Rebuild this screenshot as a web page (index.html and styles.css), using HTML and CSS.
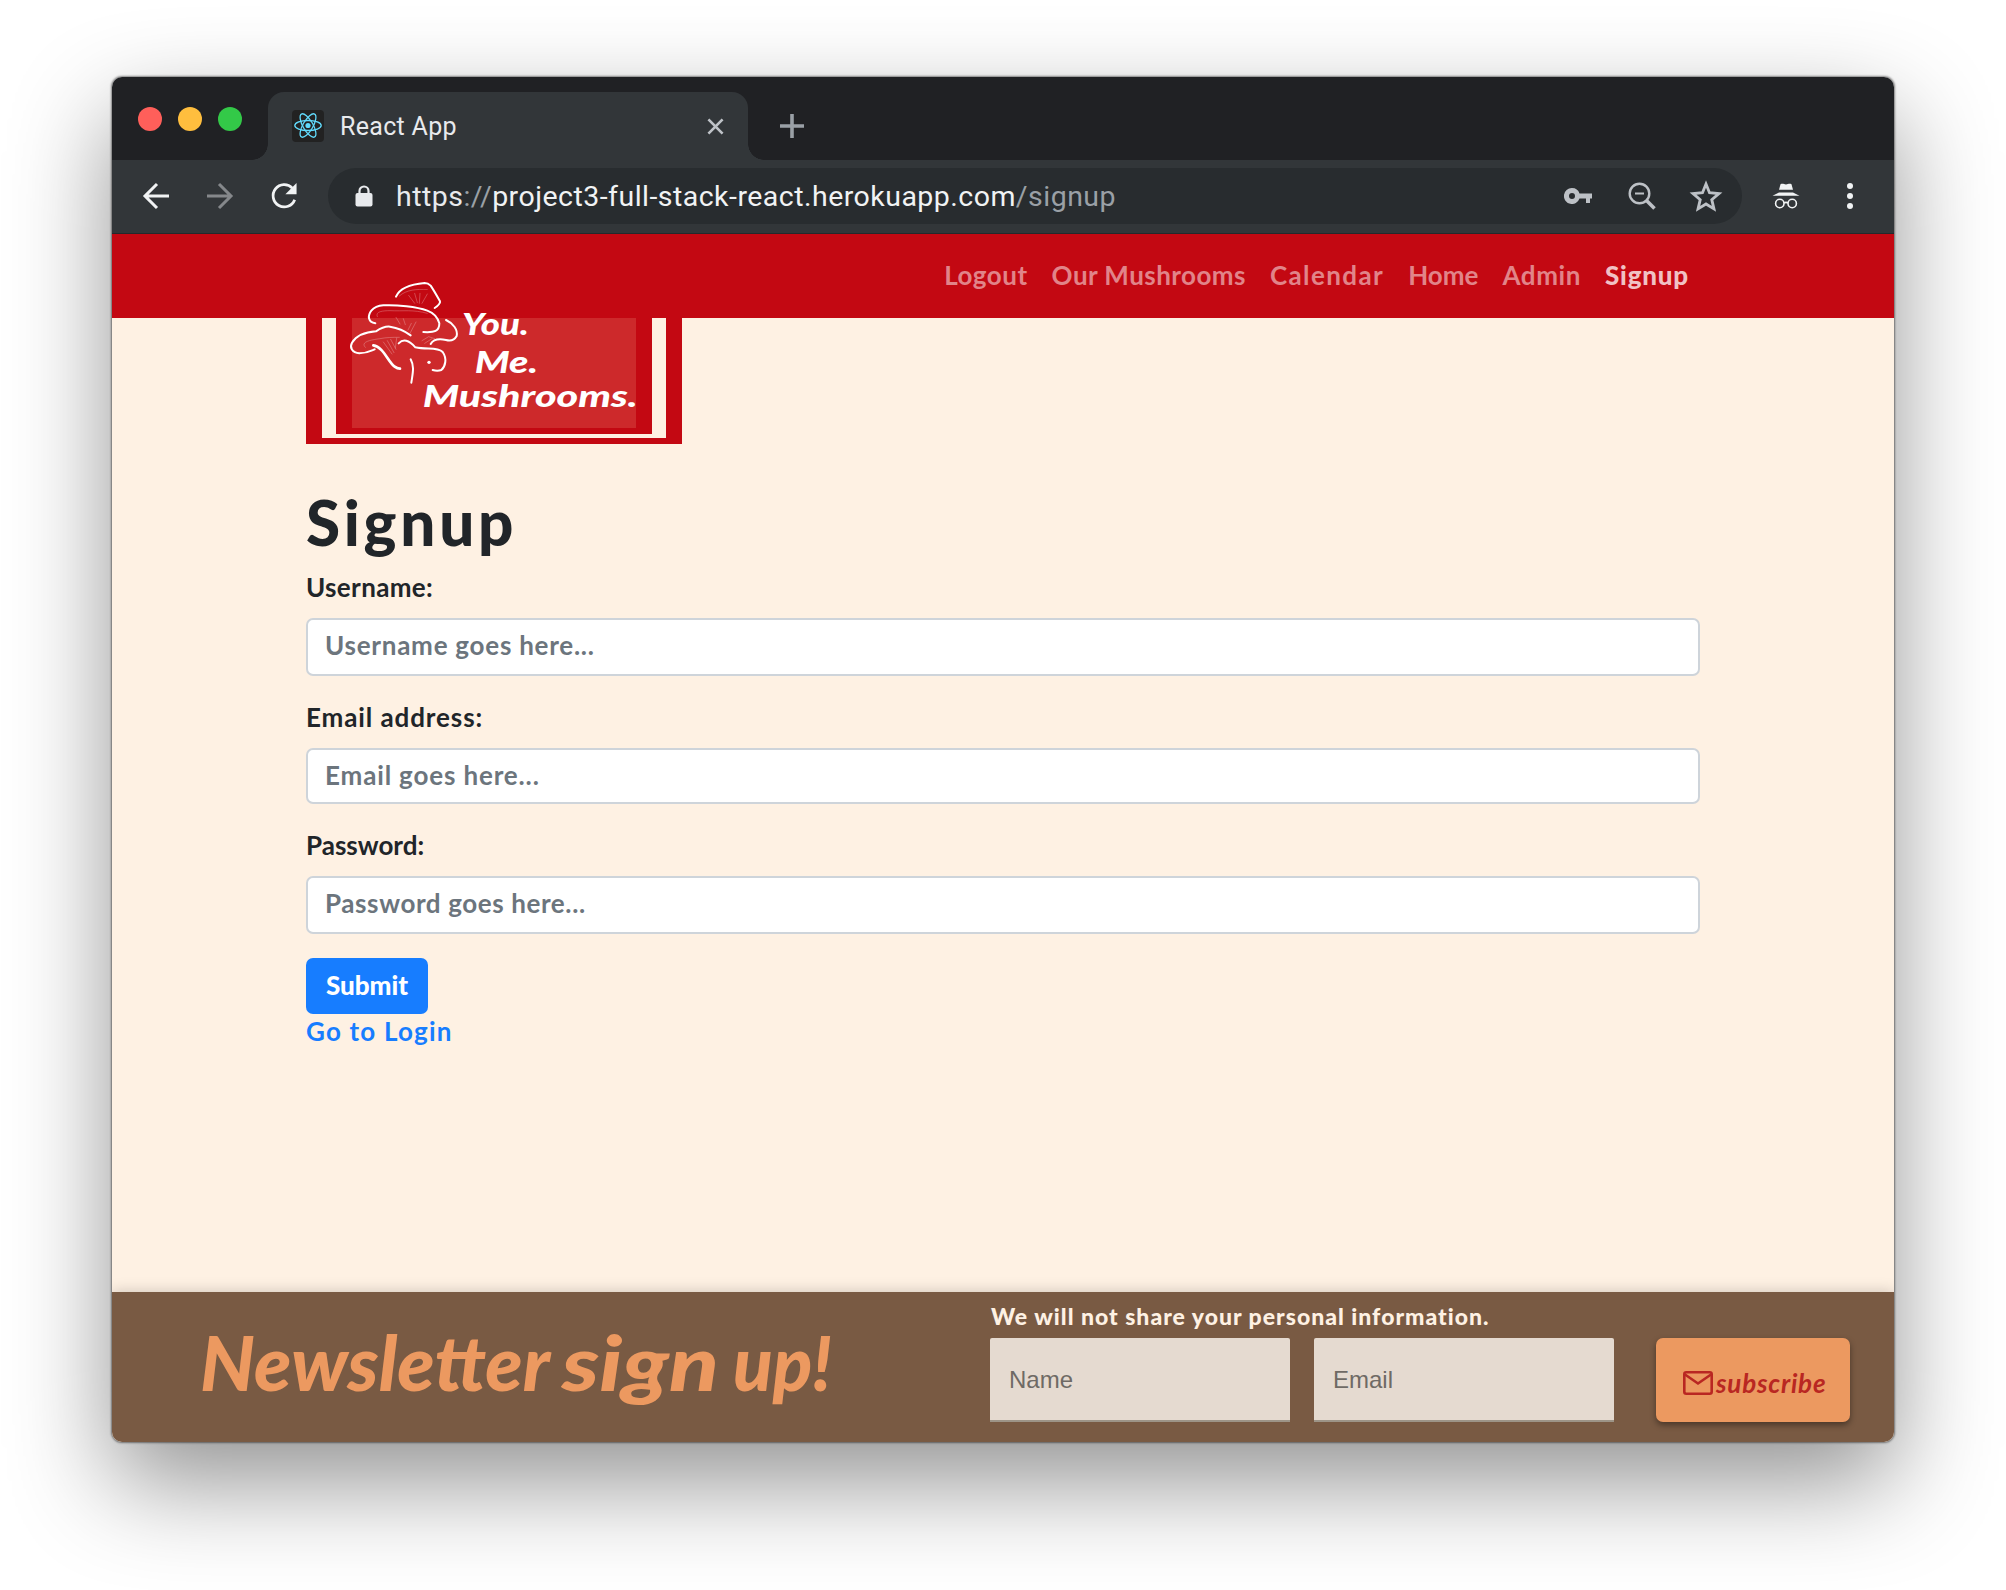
FILE: index.html
```html
<!DOCTYPE html>
<html lang="en">
<head>
<meta charset="utf-8">
<title>React App</title>
<link rel="stylesheet" href="styles.css">
</head>
<body>
<div class="window">
  <div class="tabstrip">
    <div class="lights"><i class="light red"></i><i class="light amber"></i><i class="light green"></i></div>
    <div class="tab">
      <svg class="favicon" viewBox="0 0 32 32"><rect width="32" height="32" rx="4" fill="#222"/><g fill="none" stroke="#61dafb" stroke-width="1.3"><ellipse cx="16" cy="15.500" rx="13.200" ry="5"/><ellipse cx="16" cy="15.500" rx="13.200" ry="5" transform="rotate(60 16 15.500)"/><ellipse cx="16" cy="15.500" rx="13.200" ry="5" transform="rotate(120 16 15.500)"/></g><circle cx="16" cy="15.500" r="2.600" fill="#61dafb"/></svg>
      <span class="tab-title">React App</span>
      <svg class="tab-close" viewBox="0 0 18 18"><path d="M1.500 1.500l15 15M16.500 1.500l-15 15"/></svg>
    </div>
    <svg class="new-tab" viewBox="0 0 24 24"><path d="M12 0v24M0 12h24"/></svg>
  </div>
  <div class="toolbar">
    <svg class="nav-ico back" viewBox="0 0 26 26"><path d="M26 13H2M14 1L2 13l12 12"/></svg>
    <svg class="nav-ico fwd" viewBox="0 0 26 26"><path d="M0 13h24M12 1l12 12-12 12"/></svg>
    <svg class="nav-ico reload" viewBox="0 0 28 28"><path d="M25.500 18A12 12 0 1 1 23 5.500"/><path d="M27.500 0v12H15.500z" class="solid"/></svg>
    <div class="omnibox">
      <svg class="lock" viewBox="0 0 18 22"><path d="M4.500 9V6a4.500 4.500 0 0 1 9 0v3" fill="none" stroke="#e8eaed" stroke-width="2.200"/><rect x=".5" y="8" width="17" height="13.500" rx="2" fill="#e8eaed"/></svg>
      <span class="url"><span class="scheme">https</span><span class="dim">://</span><span class="host">project3-full-stack-react.herokuapp.com</span><span class="dim">/signup</span></span>
      <svg class="key" viewBox="0 0 28 16"><path fill="#bdc1c6" fill-rule="evenodd" d="M8 0a8 8 0 1 0 7.500 10.500H22V15h4v-4.500h2v-5H15.500A8 8 0 0 0 8 0zm0 5a3 3 0 1 1 0 6 3 3 0 0 1 0-6z"/></svg>
      <svg class="lens" viewBox="0 0 28 28"><g fill="none" stroke="#bdc1c6"><circle cx="11.500" cy="11.500" r="9.800" stroke-width="2.400"/><path d="M7 11.500h9" stroke-width="1.800"/><path d="M18.500 18.500l8 8" stroke-width="3.600"/></g></svg>
      <svg class="star" viewBox="0 0 30 29"><path fill="none" stroke="#bdc1c6" stroke-width="2.500" d="M15 3.500l3.100 7.700 8.300.7-6.300 5.400 1.900 8.100L15 21.100l-7 4.300 1.900-8.100-6.300-5.400 8.300-.7z"/></svg>
    </div>
    <svg class="incognito" viewBox="0 0 28 26"><path fill="#f1f3f4" d="M8.500 1.200c2.500-1 3.500.3 5.500.3s3-1.300 5.500-.3l1.500 5.500H7zM.5 12.800l6.500-3.300h14l6.500 3.300z"/><g fill="none" stroke="#f1f3f4" stroke-width="1.600"><circle cx="7.800" cy="20.500" r="4.200"/><circle cx="20.200" cy="20.500" r="4.200"/><path d="M12 20q2-1.200 4 0"/></g></svg>
    <div class="menu-dots"><i></i><i></i><i></i></div>
  </div>
  <div class="page">
    <nav class="navbar">
      <a class="logout">Logout</a><a class="mushrooms">Our Mushrooms</a><a class="calendar">Calendar</a><a>Home</a><a class="admin">Admin</a><a class="active">Signup</a>
    </nav>
    <main class="content">
      <div class="brand">
        <div class="brand-mid"><div class="brand-in"><div class="brand-core"></div></div></div>
        <svg class="brand-art" viewBox="0 0 930 480">
          <g fill="none" stroke="#fff" stroke-linecap="round" stroke-linejoin="round">
            <g stroke-width="6">
              <path d="M168 80C180 52 220 42 254 39Q264 39 272 47C282 62 292 80 300 94Q302 102 284 114"/>
              <path d="M106 160C84 156 82 138 94 122Q106 108 130 106C170 104 230 110 262 122Q290 132 298 160C298 184 284 188 250 186"/>
              <path d="M318 150C340 160 354 180 350 198Q340 216 318 210C300 206 280 208 272 222"/>
              <path d="M104 238C90 244 80 250 58 250C36 248 28 232 36 218C50 196 80 186 108 184Q132 168 150 170C176 174 196 184 212 196"/>
              <path d="M100 226C130 230 144 276 164 290Q172 296 180 296" stroke-width="8"/>
              <path d="M176 220C190 206 206 210 226 232C260 240 292 230 308 246C322 266 316 290 304 300Q292 304 278 300"/>
              <path d="M212 268C224 290 218 310 214 338"/>
            </g>
            <g stroke-width="1.500" opacity=".5">
              <path d="M178 78C200 58 230 58 262 58M206 76l18 24M224 70l8 28M240 70l-2 30M262 72l-16 28"/>
              <path d="M112 140C104 124 130 122 150 122C190 124 220 118 262 130M168 142l12 20M190 146l6 18M228 156l-18 34M214 160l-10 20"/>
              <path d="M76 232C60 216 90 210 120 206C140 202 156 202 178 202M130 216l26 36M142 212l20 36M152 208l16 30M170 204l-4 30M246 212l20-12 18 6M254 220l22-14"/>
            </g>
          </g>
          <circle cx="267" cy="277" r="5" fill="#fff"/>
          <g class="brand-words">
            <text x="366" y="196" textLength="200" lengthAdjust="spacingAndGlyphs">You.</text>
            <text x="404" y="308" textLength="190" lengthAdjust="spacingAndGlyphs">Me.</text>
            <text x="248" y="410" textLength="645" lengthAdjust="spacingAndGlyphs">Mushrooms.</text>
          </g>
        </svg>
      </div>
      <h1 class="title">Signup</h1>
      <form class="form">
        <label class="label username">Username:</label>
        <div class="field username-field">Username goes here...</div>
        <label class="label email">Email address:</label>
        <div class="field email-field">Email goes here...</div>
        <label class="label">Password:</label>
        <div class="field">Password goes here...</div>
        <button class="submit" type="button">Submit</button>
        <a class="login">Go to Login</a>
      </form>
    </main>
    <footer class="footer">
      <svg class="news" viewBox="0 0 640 130">
        <text x="0" y="89" textLength="350" lengthAdjust="spacingAndGlyphs">Newsletter</text>
        <text x="362" y="89" textLength="157" lengthAdjust="spacingAndGlyphs">sign</text>
        <text x="533" y="89" textLength="99" lengthAdjust="spacingAndGlyphs">up!</text>
      </svg>
      <div class="subscribe-area">
        <p class="note">We will not share your personal information.</p>
        <div class="row">
          <div class="filled">Name</div>
          <div class="filled">Email</div>
          <button class="subscribe" type="button">
            <svg class="mail" viewBox="0 0 30 24"><rect x="1.300" y="1.300" width="27.400" height="21.400" rx="2"/><path d="M2 3.500l13 9 13-9"/></svg>
            <span>subscribe</span>
          </button>
        </div>
      </div>
    </footer>
  </div>
</div>
</body>
</html>
```

FILE: styles.css
```css
* { box-sizing: border-box; }
body { margin: 0; height: 1590px; background: #fff; overflow: hidden; font-family: Lato, "Open Sans", sans-serif; }
svg { display: block; flex: none; }

.window {
  width: 1782px; height: 1365px; margin: 77px 0 0 112px;
  border-radius: 10px; overflow: hidden; display: flex; flex-direction: column;
  box-shadow: 0 0 2px 1px rgba(0,0,0,.45), 0 40px 100px rgba(0,0,0,.43);
}

/* Browser chrome */
.tabstrip { height: 83px; background: #202124; display: flex; align-items: flex-start; font-family: Roboto, sans-serif; }
.lights { display: flex; gap: 16px; padding: 30px 0 0 26px; width: 156px; flex: none; }
.light { width: 24px; height: 24px; border-radius: 50%; }
.red { background: #ff5f5a; }
.amber { background: #ffbe3e; }
.green { background: #33c948; }
.tab {
  position: relative; width: 480px; height: 68px; margin-top: 15px; flex: none;
  border-radius: 16px 16px 0 0; background: #323639;
  display: flex; align-items: center; padding: 0 24px 0 24px;
}
.tab::before, .tab::after { content: ""; position: absolute; bottom: 0; width: 16px; height: 16px; }
.tab::before { left: -16px; background: radial-gradient(circle at 0 0, #202124 15.5px, #323639 16px); }
.tab::after { right: -16px; background: radial-gradient(circle at 100% 0, #202124 15.5px, #323639 16px); }
.favicon { width: 32px; height: 32px; }
.tab-title { margin-left: 16px; font-size: 25px; letter-spacing: .3px; color: #e8eaed; flex: 1; }
.tab-close { width: 17px; height: 17px; fill: none; stroke: #bdc1c6; stroke-width: 2.8; }
.new-tab { width: 24px; height: 24px; margin: 37px 0 0 32px; fill: none; stroke: #9aa0a6; stroke-width: 3.6; }

.toolbar { height: 74px; background: #323639; border-bottom: 1px solid #25282b; display: flex; align-items: flex-start; padding: 8px 0 0 31px; font-family: Roboto, sans-serif; }
.nav-ico { width: 26px; height: 26px; margin-top: 15px; overflow: visible; fill: none; stroke: #f1f3f4; stroke-width: 3; }
.nav-ico .solid { fill: #f1f3f4; stroke: none; }
.fwd { margin-left: 38px; stroke: #85888b; }
.reload { margin-left: 38px; }
.omnibox { width: 1414px; height: 56px; margin-left: 31px; border-radius: 28px; background: #282c2f; display: flex; align-items: center; padding: 0 19px 0 27px; flex: none; }
.lock { width: 18px; height: 22px; }
.url { font-size: 28.5px; letter-spacing: .47px; margin-left: 23px; flex: 1; color: #e8eaed; white-space: nowrap; }
.url .host { color: #f1f3f4; }
.url .dim { color: #9aa0a6; }
.key { width: 28px; height: 16px; }
.lens { width: 28px; height: 28px; margin-left: 36px; }
.star { width: 34px; height: 33px; margin-left: 33px; }
.incognito { width: 28px; height: 26px; margin: 15px 0 0 30px; }
.menu-dots { display: flex; flex-direction: column; gap: 4px; margin: 15px 0 0 47px; }
.menu-dots i { width: 6px; height: 6px; border-radius: 50%; background: #f1f3f4; }

/* Page */
.page { flex: 1; background: #fef1e3; display: flex; flex-direction: column; }
.navbar { height: 84px; background: #c30812; display: flex; align-items: center; justify-content: flex-end; gap: 24px; padding: 0 205px 2px 0; font-size: 26px; font-weight: 700; color: #e18489; }
.navbar .logout { letter-spacing: .5px; }
.navbar .mushrooms { letter-spacing: .45px; }
.navbar .calendar { letter-spacing: 1.4px; }
.navbar .admin { letter-spacing: .6px; }
.navbar .active { color: #f1c1c4; font-weight: 900; letter-spacing: .8px; }
.content { flex: 1; padding: 0 194px; }
.brand { position: relative; width: 376px; height: 126px; background: #c30812; padding: 0 16px 6px; }
.brand-mid { height: 120px; background: #fef1e3; padding: 0 14px 4px; }
.brand-in { height: 116px; background: #c30812; padding: 0 16px 6px; }
.brand-core { height: 110px; background: #cd292b; }
.brand-art { position: absolute; left: 34px; top: -48px; width: 310px; height: 160px; }
.brand-words { font: italic 900 92px Lato, sans-serif; fill: #fff; }
.title { margin: 41px 0 0; font-size: 62px; line-height: 74px; font-weight: 900; letter-spacing: 3.7px; color: #212529; }
.form { display: flex; flex-direction: column; align-items: flex-start; font-size: 26px; font-weight: 700; color: #212529; }
.label { line-height: 36px; margin-top: 23px; }
.label.username { margin-top: 10px; letter-spacing: .35px; }
.label.email { letter-spacing: .9px; }
.field { width: 1394px; height: 58px; margin-top: 13px; border: 2px solid #ced4da; border-radius: 7px; background: #fff; padding: 0 17px; line-height: 51px; letter-spacing: .6px; color: #6c757d; }
.username-field { letter-spacing: .75px; }
.email-field { height: 56px; letter-spacing: .85px; }
.submit { width: 122px; height: 56px; margin-top: 24px; border: 0; border-radius: 7px; background: #177dff; color: #fff; font: 900 26px/52px Lato, sans-serif; padding: 0 0 2px; }
.login { line-height: 34px; color: #177dff; letter-spacing: 1.2px; }

/* Newsletter bar */
.footer { position: relative; height: 150px; background: #795a43; box-shadow: 0 0 14px rgba(0,0,0,.2); display: flex; }
.news { width: 640px; height: 130px; margin: 10px 0 0 88px; }
.news text { font: italic 900 77px Lato, sans-serif; fill: #ec9960; }
.subscribe-area { margin-left: 150px; padding-top: 9px; }
.note { margin: 0; height: 37px; line-height: 30px; padding-left: 1px; font-size: 23px; font-weight: 900; letter-spacing: 1px; color: #fef1e3; }
.row { display: flex; }
.filled { width: 300px; height: 84px; margin-right: 24px; background: #e5dad0; border-bottom: 2px solid #9d9487; border-radius: 2px 2px 0 0; padding-left: 19px; font: 24px/84px "Liberation Sans", Arial, sans-serif; color: #6f6a65; }
.subscribe { width: 194px; height: 84px; margin-left: 18px; border: 0; border-radius: 7px; background: #ec9960; box-shadow: 0 3px 6px rgba(0,0,0,.4); display: flex; align-items: center; padding: 6px 0 0 27px; color: #b92722; font: italic 700 26px Lato, sans-serif; letter-spacing: .8px; }
.mail { width: 30px; height: 24px; margin-right: 3px; fill: none; stroke: #b92722; stroke-width: 2.6; }
```
